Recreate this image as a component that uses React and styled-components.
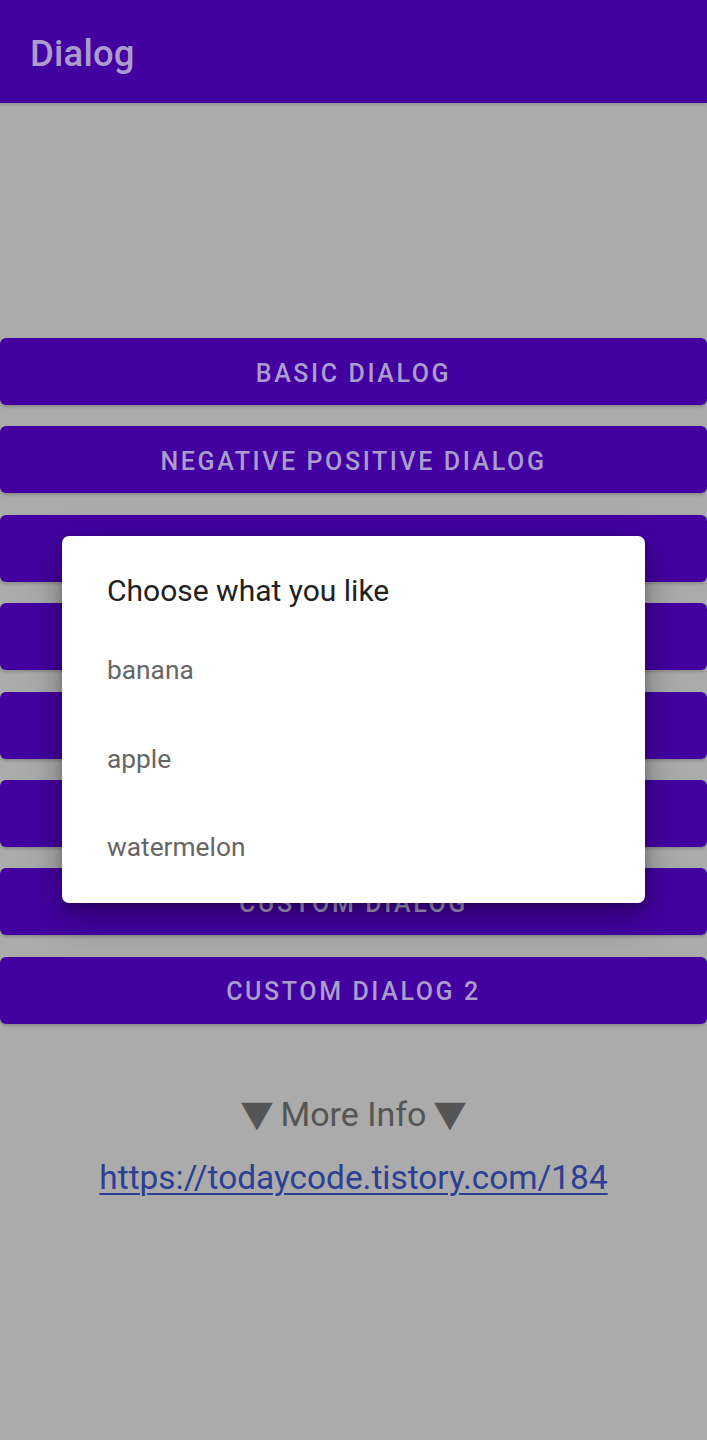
import React from "react";
import styled, { createGlobalStyle } from "styled-components";

const Global = createGlobalStyle`
  html, body { margin: 0; padding: 0; }
  body {
    background: #ababab;
    font-family: Roboto, "Noto Sans", "Liberation Sans", sans-serif;
  }
`;

const Screen = styled.div`
  position: relative;
  width: 707px;
  min-height: 1440px;
  background: #ababab;
  overflow: hidden;
`;

const AppBar = styled.header`
  height: 103px;
  background: #4300a1;
  display: flex;
  align-items: center;
  padding-left: 30px;
  box-shadow: 0 2px 3px rgba(0, 0, 0, 0.15);
`;

const Title = styled.h1`
  margin: 4px 0 0;
  font-size: 36.5px;
  font-weight: 500;
  color: #ab9ccb;
  letter-spacing: 0.2px;
`;

const ButtonList = styled.div`
  display: flex;
  flex-direction: column;
  gap: 21.4px;
  padding-top: 235px;
`;

const ActionButton = styled.button`
  height: 67px;
  width: 100%;
  border: none;
  border-radius: 6px;
  background: #4300a1;
  color: #ab9ccb;
  font-family: Roboto, "Noto Sans", sans-serif;
  font-size: 25px;
  font-weight: 500;
  letter-spacing: 2.6px;
  text-transform: uppercase;
  box-shadow: 0 2px 3px rgba(0, 0, 0, 0.18);
  padding: 3px 0 0;
`;

const Footer = styled.div`
  display: flex;
  flex-direction: column;
  align-items: center;
  margin-top: 70px;
`;

const MoreInfo = styled.div`
  display: flex;
  align-items: center;
  gap: 10px;
  font-size: 34px;
  line-height: 40px;
  color: #555555;
`;

const Tri = styled.span`
  font-family: "DejaVu Sans", sans-serif;
  font-size: 36px;
  line-height: 40px;
  transform: scaleX(1.15);
`;

const Link = styled.a`
  margin-top: 24px;
  font-size: 33.4px;
  line-height: 40px;
  color: #2b3f94;
  text-decoration: underline;
  text-underline-offset: 4px;
  text-decoration-thickness: 2px;
`;

const DialogBox = styled.div`
  position: absolute;
  left: 62px;
  top: 536px;
  width: 583px;
  height: 367px;
  background: #ffffff;
  border-radius: 7px;
  box-shadow: 0 12px 36px rgba(0, 0, 0, 0.35), 0 4px 10px rgba(0, 0, 0, 0.2);
  box-sizing: border-box;
  padding: 36px 45px 0;
`;

const DialogTitle = styled.div`
  font-size: 30px;
  line-height: 38px;
  color: #212121;
`;

const Options = styled.ul`
  list-style: none;
  margin: 31px 0 0;
  padding: 0;
`;

const Option = styled.li`
  height: 88.5px;
  display: flex;
  align-items: center;
  font-size: 26.3px;
  color: #666666;
  margin-top: ${(p) => (p.$first ? "-15px" : "0")};
`;

const buttons = [
  "Basic Dialog",
  "Negative Positive Dialog",
  "List Dialog",
  "Single Choice Dialog",
  "Multi Choice Dialog",
  "Date Picker Dialog",
  "Custom Dialog",
  "Custom Dialog 2",
];

const fruits = ["banana", "apple", "watermelon"];

export default function App() {
  return (
    <>
      <Global />
      <Screen>
        <AppBar>
          <Title>Dialog</Title>
        </AppBar>
        <ButtonList>
          {buttons.map((b) => (
            <ActionButton key={b}>{b}</ActionButton>
          ))}
        </ButtonList>
        <Footer>
          <MoreInfo>
            <Tri>▼</Tri>
            <span>More Info</span>
            <Tri>▼</Tri>
          </MoreInfo>
          <Link href="#">https://todaycode.tistory.com/184</Link>
        </Footer>
        <DialogBox>
          <DialogTitle>Choose what you like</DialogTitle>
          <Options>
            {fruits.map((f, i) => (
              <Option key={f} $first={i === 0}>
                {f}
              </Option>
            ))}
          </Options>
        </DialogBox>
      </Screen>
    </>
  );
}
